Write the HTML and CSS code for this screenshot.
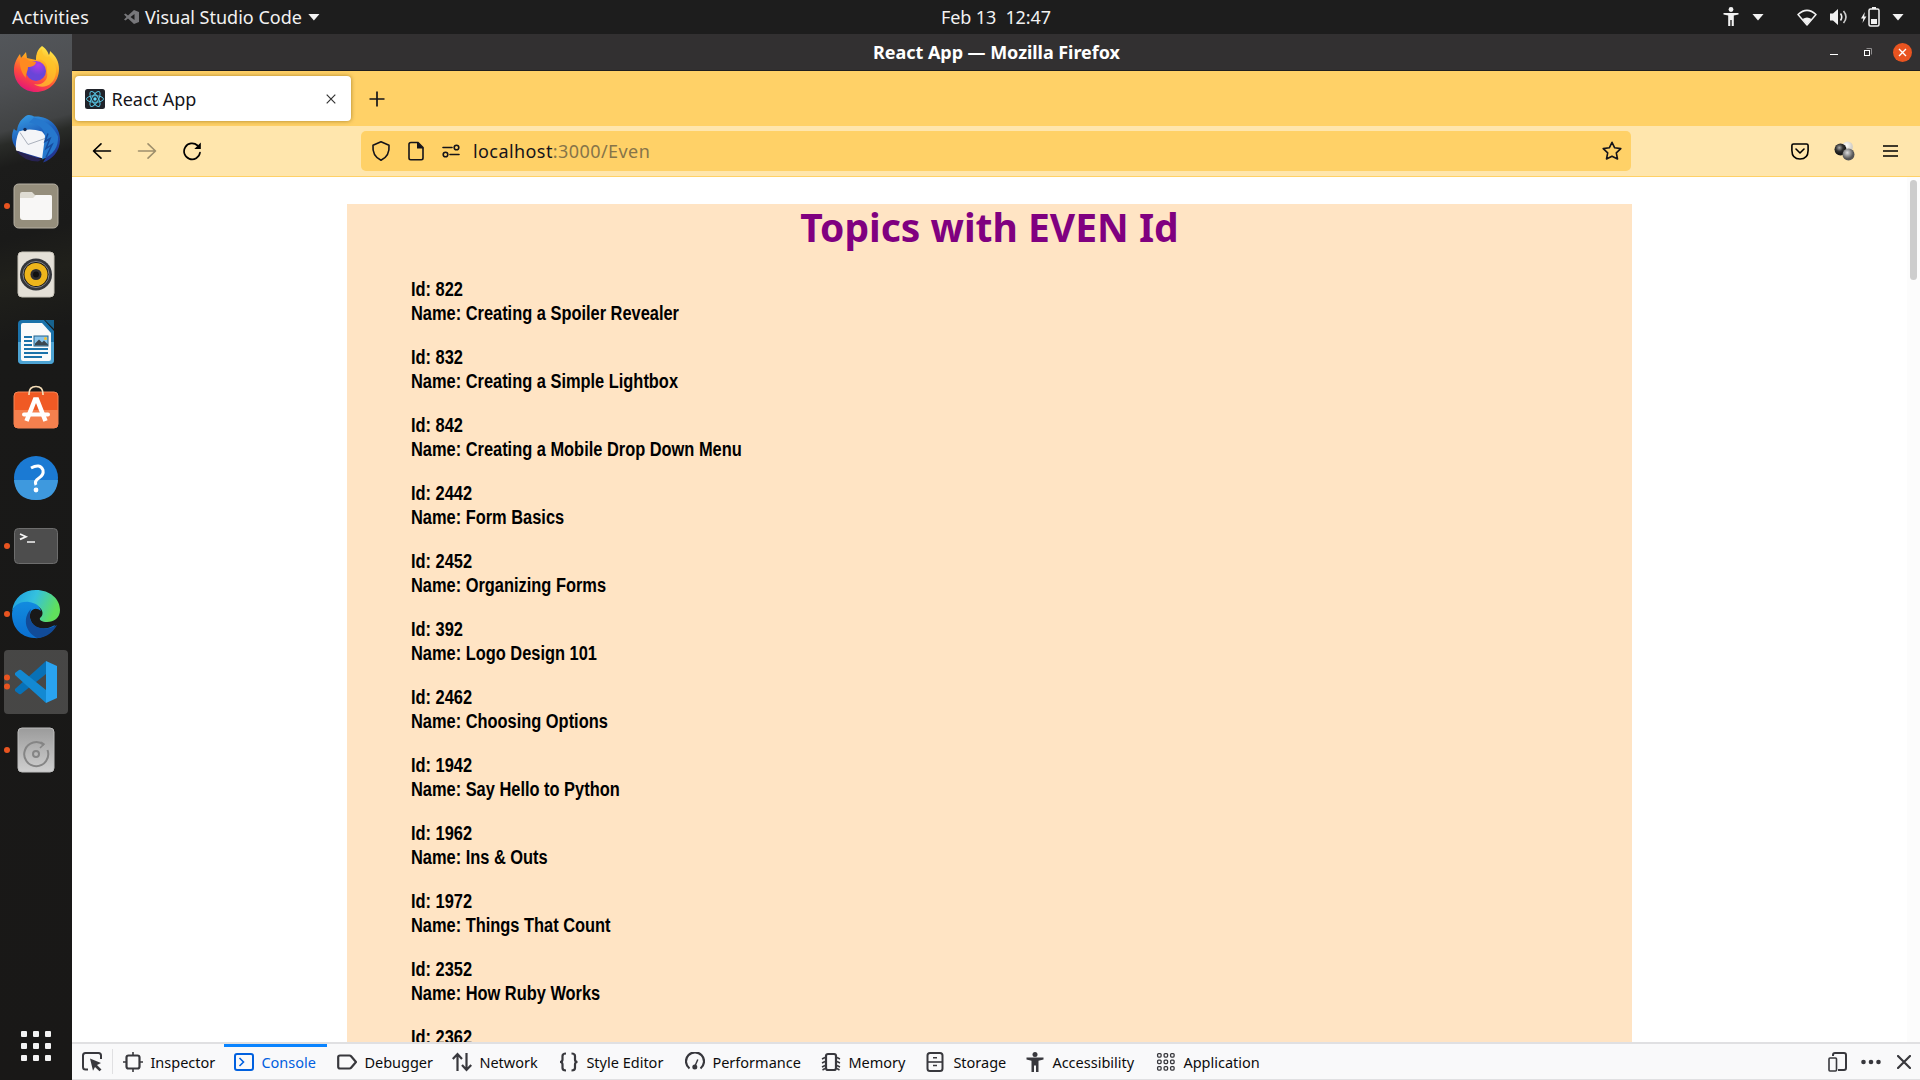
FILE: index.html
```html
<!DOCTYPE html>
<html lang="en">
<head>
<meta charset="utf-8">
<title>React App</title>
<link rel="stylesheet" href="styles.css">
</head>
<body>
<header class="topbar">
  <div class="topbar-left">
    <span class="activities">Activities</span>
    <svg class="app-glyph" width="15" height="14" viewBox="0 0 15 14"><path d="M10 0 15 2V12L10 14 4 8.600 1.500 10.500 0 9.500 2.500 7 0 4.500 1.500 3.500 4 5.400ZM10.500 4 6.500 7 10.500 10Z" fill="#77777a" fill-rule="evenodd"/></svg>
    <span>Visual Studio Code</span>
    <i class="caret"></i>
  </div>
  <span class="clock">Feb 13&nbsp; 12:47</span>
  <div class="topbar-right">
    <svg width="16" height="20" viewBox="0 0 16 20" fill="#f2f2f2"><circle cx="8" cy="2.500" r="2.400"/><path d="M.5 6h15v1.600l-4.700.8V19H8.700v-6H7.300v6H5.200V8.400L.5 7.600Z"/></svg>
    <i class="caret caret-a11y"></i>
    <svg class="wifi" width="20" height="17" viewBox="0 0 20 17"><path d="M1 5.500Q10-2.800 19 5.500L10 16Z" fill="none" stroke="#f2f2f2" stroke-width="1.500" stroke-linejoin="round"/><path d="M5.500 10Q10 7 14.500 10L10 15.500Z" fill="#f2f2f2"/></svg>
    <svg class="volume" width="20" height="18" viewBox="0 0 20 18"><path d="M1 5.500h3L9 1v16L4 12.500H1Z" fill="#f2f2f2"/><path d="M11.500 5.500q2.500 3.500 0 7" stroke="#f2f2f2" stroke-width="1.600" fill="none"/><path d="M14.500 3q5 6 0 12" stroke="#ccc" stroke-width="1.600" fill="none"/></svg>
    <svg class="battery" width="19" height="20" viewBox="0 0 19 20"><path d="M3.800 5 0 11.500h2.300L1.500 16 5.400 9.500H3.200Z" fill="#f2f2f2"/><path d="M11 0h4v2h-4Z" fill="#f2f2f2"/><rect x="8" y="2" width="10" height="17" rx="1.500" fill="none" stroke="#f2f2f2" stroke-width="1.500"/><path d="M10 12h6v5h-6Z" fill="#f2f2f2"/></svg>
    <i class="caret caret-system"></i>
  </div>
</header>

<div class="desktop">
  <nav class="dock">
    <div class="dock-apps">
      <svg viewBox="0 0 72 68">
        <defs>
          <linearGradient id="fx" x1=".8" y1="0" x2=".3" y2="1"><stop offset="0" stop-color="#fff44f"/><stop offset=".4" stop-color="#ffa320"/><stop offset=".7" stop-color="#ff4b3c"/><stop offset="1" stop-color="#e3147a"/></linearGradient>
          <radialGradient id="fxg" cx=".6" cy=".2"><stop offset="0" stop-color="#b03ce8"/><stop offset="1" stop-color="#6a45d8"/></radialGradient>
        </defs>
        <path d="M42 10c5 3 6 7 7 9 1-2 1-4 1-4 6 5 9 11 9 18 0 14-11 23-23 23S14 47 14 34c0-7 3-12 6-16l1 4 5-6 1 6 9 2c0-7 2-11 6-14Z" fill="url(#fx)"/>
        <circle cx="36" cy="35" r="10" fill="url(#fxg)"/>
        <path d="M20 22c4-1 7 0 9 3l7 1c0 3-4 5-8 5 0 5-3 7-2 11-5-5-7-13-6-20Z" fill="#ff8a20"/>
        <path d="M36 24c8-2 12 4 11 12 2 8-5 14-13 12 8 6 21 2 22-12 1-8-5-12-7-16-2 4-7 0-7-7-4 3-6 6-6 11Z" fill="#ffc62a" opacity=".75"/>
      </svg>
      <svg viewBox="0 -1.500 72 68">
        <defs><linearGradient id="tb" x2=".4" y2="1"><stop stop-color="#3aa5ea"/><stop offset=".5" stop-color="#1f62bd"/><stop offset="1" stop-color="#223894"/></linearGradient></defs>
        <path d="M24 12c4-4 8-2 10-1 15-1 26 10 26 23 0 12-8 20-17 23l3-5C29 55 13 46 12 32c0-4 1-7 2-9 1 2 2 2 3 2 1-6 3-10 7-13Z" fill="url(#tb)"/>
        <path d="M19 26q10-4 23 0l4 5-3 22-27-8q-1-10 3-19Z" fill="#f4f5f8"/>
        <path d="M20 27l8 12 17-6" fill="none" stroke="#aab0bc"/>
        <path d="M29 17q15 2 16 14l-3 23q17-7 16-23-7-15-24-19Z" fill="#2678cd"/>
        <path d="M48 28l-3 8 5-3-4 10 6-4-6 13" fill="none" stroke="#174b9c" stroke-width="1.500"/>
        <circle cx="25" cy="24" r="1.700" fill="#142a55"/>
        <path d="M16 45l26 9-4 2q-14 0-22-11Z" fill="#272252"/>
      </svg>
      <svg viewBox="0 0 72 68">
        <circle cx="7" cy="34" r="3" fill="#e95420"/>
        <rect x="14" y="12" width="44" height="44" rx="4.500" fill="#958e7c" stroke="#b7b1a4"/>
        <path d="M20 22q0-2 2-2h10l3 3h15q2 0 2 2v4H20Z" fill="#dfdcd3"/>
        <path d="M20 26h13l3-3h14q2 0 2 2v20q0 3-3 3H23q-3 0-3-3Z" fill="#f8f7f6"/>
      </svg>
      <svg viewBox="0 0 72 68">
        <rect x="18" y="12" width="36" height="45" rx="4" fill="#e4e0d7" stroke="#c9c5ba"/>
        <circle cx="36" cy="34.500" r="16" fill="#34363b"/><circle cx="36" cy="34.500" r="13" fill="#161616" stroke="#85868a"/>
        <circle cx="36" cy="34.500" r="11.500" fill="#edb51c"/><circle cx="36" cy="34.500" r="5.500" fill="#2e2e30"/><circle cx="36" cy="34.500" r="3" fill="#111"/>
      </svg>
      <svg viewBox="0 0 72 68">
        <path d="M22 12h22l10 11v29q0 4-4 4H22q-4 0-4-4V16q0-4 4-4Z" fill="#1b72aa"/><path d="M18 34h36v18q0 4-4 4H22q-4 0-4-4Z" fill="#4da3d3"/>
        <path d="M45 12h9v9Z" fill="#17638f"/>
        <path d="M23 15h19l9 10v26q0 2-2 2H23q-2 0-2-2V17q0-2 2-2Z" fill="#fafafa"/>
        <path d="M24 29h8M24 33h8M24 37h8M24 41h24M24 45h24M24 49h18" stroke="#1b72aa" stroke-width="2"/>
        <rect x="34" y="28" width="14" height="10" fill="#8ac5ec" stroke="#20628c"/><path d="M35 37.500v-2l4-4 3 3 2-2 4 4v1Z" fill="#3b4650"/><circle cx="45.500" cy="30.500" r="1.500" fill="#f6c22f"/>
      </svg>
      <svg viewBox="0 0 72 68">
        <rect x="14" y="16" width="44" height="36" rx="4" fill="#f05a24" stroke="#f58657"/>
        <path d="M14 34h44v14q0 4-4 4H18q-4 0-4-4Z" fill="#f4804e"/>
        <path d="M29 19v-1q0-7.500 7-7.500t7 7.500v1" fill="none" stroke="#f3dcb6" stroke-width="1.700"/>
        <path d="M26.500 45l8.500-21.500h2L45.500 45" fill="none" stroke="#fff" stroke-width="4.500"/>
        <path d="M24 38.500h24" stroke="#fff" stroke-width="4" stroke-linecap="round"/>
      </svg>
      <svg viewBox="0 0 72 68">
        <circle cx="36" cy="34" r="22" fill="#1b7ad3"/><path d="M14 36h44q-2 20-22 20T14 36Z" fill="#3e99de"/>
        <path d="M31 24q9-5 12 2 1 5-4 8t-3 7" fill="none" stroke="#fff" stroke-width="3"/><circle cx="36" cy="46" r="2.400" fill="#fff"/>
      </svg>
      <svg viewBox="0 0 72 68">
        <circle cx="7" cy="34" r="3" fill="#e95420"/>
        <rect x="14.500" y="16.500" width="43" height="35" rx="4" fill="#4d4d4d" stroke="#6d6d6d"/>
        <path d="M20 22l6 2.700-6 2.700M27 30h8" fill="none" stroke="#f5f5f5" stroke-width="1.700"/>
      </svg>
      <svg viewBox="0 0 72 68">
        <defs>
          <linearGradient id="eg" x2="1" y2=".3"><stop stop-color="#1a9be0"/><stop offset=".5" stop-color="#35c1de"/><stop offset="1" stop-color="#60e05c"/></linearGradient>
          <linearGradient id="eb" x2="0" y2="1"><stop stop-color="#128bdf"/><stop offset="1" stop-color="#0a6fd0"/></linearGradient>
        </defs>
        <circle cx="7" cy="34" r="3" fill="#e95420"/>
        <path d="M12 31C14 17 24 10 36 10c14 0 24 9 24 20 0 8-6 12-13 12-5 0-8-2-7-4 4-3 3-8-1-11-9-6-23-4-27 4Z" fill="url(#eg)"/>
        <path d="M12 34c0-8 8-13 17-12 7 1 11 4 12 9-6-5-12-1-11 7 2 10 13 14 25 7-5 10-14 14-21 13C20 57 12 47 12 34Z" fill="url(#eb)"/>
        <path d="M31 29c-8 8-7 22 6 29 10 0 17-7 20-13-12 7-25 3-27-7 0-3 0-6 1-9Z" fill="#114b98"/>
      </svg>
      <svg viewBox="0 0 72 68">
        <rect x="4" y="2" width="64" height="64" rx="4" fill="#fff" opacity=".2"/>
        <circle cx="7" cy="29.500" r="3" fill="#e95420"/><circle cx="7" cy="38.500" r="3" fill="#e95420"/>
        <path d="M15 43l4 3q1 .5 2 0L46 26V13L15 41Z" fill="#0871b7"/>
        <path d="M15 25l4-3q1-.5 2 0L46 42v13L15 27Z" fill="#1389d2"/>
        <path d="M46 13l11 5v32l-11 5Z" fill="#29a3f0"/>
      </svg>
      <svg viewBox="0 0 72 68">
        <defs><linearGradient id="dk" x2="0" y2="1"><stop stop-color="#9b9b9b"/><stop offset="1" stop-color="#cfcfcf"/></linearGradient></defs>
        <circle cx="7" cy="34" r="3" fill="#e95420"/>
        <rect x="18" y="12" width="36" height="44" rx="4" fill="url(#dk)" stroke="#bdbdbd"/>
        <path d="M44 29a12 12 0 1 0 3.500 5" fill="none" stroke="#858585" stroke-width="2"/><path d="M40 32l4-4-3-2" fill="none" stroke="#858585" stroke-width="1.500"/>
        <circle cx="36" cy="38" r="3" fill="none" stroke="#858585" stroke-width="2"/>
      </svg>
    </div>
    <svg class="show-apps" viewBox="0 0 30 30" fill="#f3f3f3"><rect width="6" height="6" rx="1"/><rect x="12" width="6" height="6" rx="1"/><rect x="24" width="6" height="6" rx="1"/><rect y="12" width="6" height="6" rx="1"/><rect x="12" y="12" width="6" height="6" rx="1"/><rect x="24" y="12" width="6" height="6" rx="1"/><rect y="24" width="6" height="6" rx="1"/><rect x="12" y="24" width="6" height="6" rx="1"/><rect x="24" y="24" width="6" height="6" rx="1"/></svg>
  </nav>

  <main class="window">
    <div class="titlebar">
      <span class="window-title">React App — Mozilla Firefox</span>
      <div class="window-buttons">
        <svg width="8" height="18" viewBox="0 0 8 18"><path d="M0 11.500h8" stroke="#fff"/></svg>
        <svg width="9" height="18" viewBox="0 0 9 18" fill="none"><path d="M2.500 5.500h5v6" stroke="#8f8d8e"/><rect x=".5" y="7.500" width="5" height="5" stroke="#fff"/></svg>
        <svg width="19" height="19" viewBox="0 0 19 19"><circle cx="9.500" cy="9.500" r="9.500" fill="#e95420"/><path d="M6 6l7 7M13 6l-7 7" stroke="#fff" stroke-width="1.400"/></svg>
      </div>
    </div>

    <div class="tabstrip">
      <div class="tab">
        <svg width="20" height="20" viewBox="0 0 20 20"><rect width="20" height="20" rx="2.500" fill="#20232a"/><g fill="none" stroke="#57c1de"><ellipse cx="10" cy="10" rx="8.500" ry="3.300"/><ellipse cx="10" cy="10" rx="8.500" ry="3.300" transform="rotate(60 10 10)"/><ellipse cx="10" cy="10" rx="8.500" ry="3.300" transform="rotate(120 10 10)"/></g><circle cx="10" cy="10" r="1.700" fill="#61dafb"/></svg>
        <span class="tab-label">React App</span>
        <svg class="tab-close" width="10" height="10" viewBox="0 0 10 10"><path d="M.7.700l8.600 8.600M9.300.700.7 9.300" stroke="#333" stroke-width="1.200"/></svg>
      </div>
      <svg class="new-tab" width="16" height="16" viewBox="0 0 16 16"><path d="M8 .5v15M.5 8h15" stroke="#15141a" stroke-width="1.700"/></svg>
    </div>

    <div class="toolbar">
      <div class="nav-buttons">
        <svg width="20" height="20" viewBox="0 0 20 20" fill="none" stroke="#000" stroke-width="1.600" stroke-linecap="round" stroke-linejoin="round"><path d="M18.500 10h-17M9 2.800 1.500 10 9 17.200"/></svg>
        <svg width="20" height="20" viewBox="0 0 20 20" fill="none" stroke="#9e8f6c" stroke-width="1.600" stroke-linecap="round" stroke-linejoin="round"><path d="M1.500 10h17M11 2.800l7.500 7.200-7.500 7.200"/></svg>
        <svg width="20" height="20" viewBox="0 0 20 20"><path d="M15.500 4.500A8 8 0 1 0 18 11.500" fill="none" stroke="#000" stroke-width="1.700" stroke-linecap="round"/><path d="M18.800 1.500V8h-6.500Z"/></svg>
      </div>
      <div class="urlbar">
        <svg class="shield" width="20" height="22" viewBox="0 0 20 22"><path d="M10 1.800 18 5.300q1 10.500-8 15-9-4.500-8-15Z" fill="none" stroke="#15141a" stroke-width="1.600" stroke-linejoin="round"/></svg>
        <svg class="page-icon" width="16" height="20" viewBox="0 0 16 20"><path d="M3 1.500h7l5 5V17q0 1.700-1.700 1.700H2.700Q1 18.700 1 17V3.200Q1 1.500 3 1.500Z" fill="none" stroke="#15141a" stroke-width="1.600"/><path d="M9 1v6.500h6.500Z" fill="#15141a"/></svg>
        <svg class="perms" width="18" height="14" viewBox="0 0 18 14" fill="none" stroke="#15141a" stroke-width="1.600" stroke-linecap="round"><path d="M1 3.500h9M8 10.500h9"/><circle cx="14.500" cy="3.500" r="2.300"/><circle cx="3.500" cy="10.500" r="2.300"/></svg>
        <span class="url">localhost<span class="url-path">:3000/Even</span></span>
        <svg class="star" width="20" height="20" viewBox="0 0 20 20"><path d="M10 1.300 12.700 6.800l6.100.8-4.500 4.200 1.200 6.200L10 15.200 4.500 18l1.200-6.200L1.200 7.600l6.100-.8Z" fill="none" stroke="#15141a" stroke-width="1.600" stroke-linejoin="round"/></svg>
      </div>
      <div class="toolbar-actions">
        <svg width="18" height="17" viewBox="0 0 18 17" fill="none" stroke="#000" stroke-width="1.600" stroke-linecap="round" stroke-linejoin="round"><path d="M2.500 1h13q1.600 0 1.600 1.500V7.500Q17 16 9 16T.9 7.500v-5Q.9 1 2.500 1ZM5 6l4 4 4-4"/></svg>
        <svg class="spheres" width="21" height="20" viewBox="0 0 21 20"><defs><radialGradient id="s1" cx=".4" cy=".35"><stop stop-color="#aaa"/><stop offset=".6" stop-color="#333"/><stop offset="1" stop-color="#1a1a1a"/></radialGradient><radialGradient id="s2" cx=".4" cy=".35"><stop stop-color="#fff"/><stop offset="1" stop-color="#d5d1c8"/></radialGradient><radialGradient id="s3" cx=".4" cy=".35"><stop stop-color="#ddd"/><stop offset="1" stop-color="#555"/></radialGradient></defs><circle cx="13.500" cy="6" r="5.500" fill="url(#s2)"/><circle cx="6.500" cy="8.500" r="6" fill="url(#s1)"/><circle cx="14.500" cy="13.500" r="6" fill="url(#s3)"/></svg>
        <svg width="15" height="13" viewBox="0 0 15 13"><path d="M0 1h15M0 6h15M0 11h15" stroke="#000" stroke-width="1.500"/></svg>
      </div>
    </div>

    <div class="viewport">
      <section class="topics">
        <h1>Topics with EVEN Id</h1>
        <ul class="topic-list">
          <li>Id: 822<br>Name: Creating a Spoiler Revealer</li>
          <li>Id: 832<br>Name: Creating a Simple Lightbox</li>
          <li>Id: 842<br>Name: Creating a Mobile Drop Down Menu</li>
          <li>Id: 2442<br>Name: Form Basics</li>
          <li>Id: 2452<br>Name: Organizing Forms</li>
          <li>Id: 392<br>Name: Logo Design 101</li>
          <li>Id: 2462<br>Name: Choosing Options</li>
          <li>Id: 1942<br>Name: Say Hello to Python</li>
          <li>Id: 1962<br>Name: Ins &amp; Outs</li>
          <li>Id: 1972<br>Name: Things That Count</li>
          <li>Id: 2352<br>Name: How Ruby Works</li>
          <li>Id: 2362</li>
        </ul>
      </section>
      <div class="scrollbar"><div class="thumb"></div></div>
    </div>

    <div class="devtools">
      <div class="picker">
        <svg width="20" height="20" viewBox="0 0 20 20"><path d="M6 17.500H3.500Q1 17.500 1 15V3.500Q1 1 3.500 1h13Q19 1 19 3.500V7" fill="none" stroke="#38383d" stroke-width="2"/><path d="M8 6.500l11 4.500-4 2 4.500 4.500-2 1.700L13 15l-2 3.800Z" fill="#38383d"/></svg>
      </div>
      <div class="tool">
        <svg width="20" height="20" viewBox="0 0 20 20" fill="none" stroke="#38383d"><rect x="3.500" y="3.500" width="13" height="13" rx="2" stroke-width="2.200"/><path d="M10 0v3M10 17v3M0 10h3M17 10h3" stroke-width="1.600"/></svg>
        <span>Inspector</span>
      </div>
      <div class="tool tool-active">
        <svg width="20" height="20" viewBox="0 0 20 20" fill="none" stroke="#0060df"><rect x="1" y="2" width="18" height="16" rx="2" stroke-width="2"/><path d="M5.500 6l4 4-4 4" stroke-width="1.600"/></svg>
        <span>Console</span>
      </div>
      <div class="tool">
        <svg width="20" height="20" viewBox="0 0 20 20"><path d="M3 3.500h9.500q1 0 1.600.7L19 10l-4.900 5.800q-.6.700-1.600.700H3q-1.800 0-1.800-1.700V5.200Q1.200 3.500 3 3.500Z" fill="none" stroke="#38383d" stroke-width="2.200"/></svg>
        <span>Debugger</span>
      </div>
      <div class="tool">
        <svg width="20" height="20" viewBox="0 0 20 20" fill="none" stroke="#38383d" stroke-width="2.200"><path d="M5.500 19V2M.8 7l4.700-5L10 7M14.500 1v17M10 13l4.500 5 4.700-5"/></svg>
        <span>Network</span>
      </div>
      <div class="tool">
        <svg width="20" height="20" viewBox="0 0 20 20" fill="none" stroke="#38383d" stroke-width="2.200"><path d="M7 1.500Q3.500 1.500 3.500 4v3.500Q3.500 10 1 10q2.500 0 2.500 2.500V16q0 2.500 3.500 2.500M12.500 1.500Q16 1.500 16 4v3.500q0 2.500 2.500 2.500-2.500 0-2.500 2.500V16q0 2.500-3.500 2.500"/></svg>
        <span>Style Editor</span>
      </div>
      <div class="tool">
        <svg width="20" height="20" viewBox="0 0 20 20" fill="none" stroke="#38383d"><path d="M4.500 16.500a9 9 0 1 1 11 0" stroke-width="2.200"/><path d="M10 14l2.800-6.500" stroke-width="1.500"/><circle cx="9.800" cy="15" r="2.500" fill="#38383d" stroke="none"/></svg>
        <span>Performance</span>
      </div>
      <div class="tool">
        <svg width="20" height="20" viewBox="0 0 20 20" fill="none" stroke="#38383d"><rect x="5" y="2" width="10" height="16" rx="2" stroke-width="2.200"/><path d="M4 5.500 1 7M4 9.500 1 11M4 13.500 1 15M4 16.500 1.500 18M16 5.500l3 1.500M16 9.500l3 1.500M16 13.500l3 1.500M16 16.500l2.500 1.500" stroke-width="1.500"/></svg>
        <span>Memory</span>
      </div>
      <div class="tool">
        <svg width="20" height="20" viewBox="0 0 20 20" fill="none" stroke="#38383d"><rect x="1.500" y="1" width="15" height="18" rx="2.500" stroke-width="2"/><path d="M2 10h14" stroke-width="1.600"/><path d="M7 5.700h4M7 13.500h4" stroke-width="1.600"/></svg>
        <span>Storage</span>
      </div>
      <div class="tool">
        <svg width="20" height="20" viewBox="0 0 20 20" fill="#38383d"><circle cx="10" cy="2.600" r="2.500"/><path d="M1.500 5.500h17v2l-5 1.200V20H11v-6.500H9V20H6.500V8.700l-5-1.200Z"/></svg>
        <span>Accessibility</span>
      </div>
      <div class="tool">
        <svg width="20" height="20" viewBox="0 0 20 20" fill="none" stroke="#38383d" stroke-width="1.300"><rect x="1.600" y="1.600" width="3.500" height="3.500" rx="1"/><rect x="8.100" y="1.600" width="3.500" height="3.500" rx="1"/><rect x="14.600" y="1.600" width="3.500" height="3.500" rx="1"/><rect x="1.600" y="8.100" width="3.500" height="3.500" rx="1"/><rect x="8.100" y="8.100" width="3.500" height="3.500" rx="1"/><rect x="14.600" y="8.100" width="3.500" height="3.500" rx="1"/><rect x="1.600" y="14.600" width="3.500" height="3.500" rx="1"/><rect x="8.100" y="14.600" width="3.500" height="3.500" rx="1"/><rect x="14.600" y="14.600" width="3.500" height="3.500" rx="1"/></svg>
        <span>Application</span>
      </div>
      <div class="devtools-actions">
        <svg width="20" height="20" viewBox="0 0 20 20" fill="none" stroke="#38383d"><path d="M5 4V3q0-2 2-2h9q2 0 2 2v13q0 2-2 2h-6" stroke-width="2"/><rect x="1" y="6" width="7.500" height="13" rx="1" stroke-width="1.600"/></svg>
        <svg width="20" height="20" viewBox="0 0 20 20" fill="#38383d"><circle cx="2.500" cy="10" r="2.300"/><circle cx="10" cy="10" r="2.300"/><circle cx="17.500" cy="10" r="2.300"/></svg>
        <svg width="14" height="14" viewBox="0 0 14 14"><path d="M1 1l12 12M13 1 1 13" stroke="#38383d" stroke-width="2.200" stroke-linecap="round"/></svg>
      </div>
    </div>
  </main>
</div>
</body>
</html>
```
FILE: styles.css
```css
* { box-sizing: border-box; }

body {
  margin: 0;
  width: 1920px;
  height: 1080px;
  overflow: hidden;
  display: flex;
  flex-direction: column;
  background: #1d1d1d;
  font-family: "Noto Sans", "Open Sans", sans-serif;
  font-size: 18px;
}

svg { display: block; flex: none; }

/* System bar */
.topbar {
  flex: none;
  height: 34px;
  display: grid;
  grid-template-columns: 941px auto 1fr;
  align-items: center;
  background: #1d1d1d;
  color: #f2f2f2;
  line-height: 33px;
}
.topbar-left, .topbar-right { display: flex; align-items: center; }
.topbar-left { padding-left: 12px; }
.topbar-right { justify-content: flex-end; padding-right: 16px; }
.activities { width: 112px; letter-spacing: 0.2px; }
.app-glyph { margin-right: 6px; }
.clock { letter-spacing: -0.1px; }
.caret {
  width: 12px;
  height: 7px;
  margin-left: 6px;
  background: #f2f2f2;
  clip-path: polygon(0 0, 100% 0, 50% 100%);
}
.caret-a11y { margin-left: 13px; }
.wifi { margin-left: 33px; }
.volume { margin-left: 12px; }
.battery { margin-left: 12px; }
.caret-system { margin-left: 12px; }

.desktop { flex: 1; display: flex; min-height: 0; }

/* Dock */
.dock {
  flex: none;
  width: 72px;
  display: flex;
  flex-direction: column;
  justify-content: space-between;
  align-items: center;
  padding: 2px 0 19px;
  background:
    linear-gradient(165deg, #53565a 0, #4e5053 50px, #414344 95px, #292b28 108px, #1c1c1b 130px, #1a1a19 200px, #20201b 240px, #191918 300px, #191817 100%);
}
.dock-apps { display: flex; flex-direction: column; }
.dock-apps svg { width: 72px; height: 68px; }
.show-apps { width: 30px; height: 30px; }

/* Browser window */
.window {
  flex: 1;
  min-width: 0;
  display: flex;
  flex-direction: column;
  background: #fff;
}
.titlebar {
  flex: none;
  height: 37px;
  display: grid;
  grid-template-columns: 1fr auto 1fr;
  align-items: center;
  background: #323031;
  border-bottom: 1px solid #1f1e1e;
  color: #fff;
}
.window-title {
  grid-column: 2;
  padding-left: 1px;
  font-weight: 700;
  line-height: 36px;
  letter-spacing: -0.05px;
}
.window-buttons {
  display: flex;
  align-items: center;
  justify-content: flex-end;
  padding-right: 8px;
}
.window-buttons svg + svg { margin-left: 26px; }
.window-buttons svg:last-child { margin-left: 20px; }

.tabstrip {
  flex: none;
  height: 55px;
  display: flex;
  align-items: center;
  padding: 0 3px;
  background: #ffd167;
}
.tab {
  width: 276px;
  height: 45px;
  display: flex;
  align-items: center;
  padding: 0 15px 0 10px;
  border-radius: 4px;
  background: #fff;
  box-shadow: 0 0 4px rgba(110, 80, 0, 0.6);
  color: #15141a;
}
.tab-label { margin-left: 6.5px; flex: 1; }
.new-tab { margin-left: 18px; }

.toolbar {
  flex: none;
  height: 51px;
  display: flex;
  align-items: center;
  padding: 0 22px 0 20px;
  background: #ffe6ad;
  border-bottom: 1px solid #ffd167;
}
.nav-buttons { display: flex; gap: 25px; width: 269px; }
.urlbar {
  width: 1270px;
  height: 40px;
  display: flex;
  align-items: center;
  padding: 0 9px 0 10px;
  border-radius: 5px;
  background: #ffd167;
  color: #15141a;
}
.page-icon { margin-left: 17px; }
.perms { margin-left: 18px; }
.url { margin-left: 13px; flex: 1; letter-spacing: 0.42px; }
.url-path { color: #867449; }
.toolbar-actions {
  flex: 1;
  display: flex;
  align-items: center;
  justify-content: flex-end;
}
.spheres { margin: 0 28px 0 25px; }

/* Page */
.viewport {
  flex: 1;
  min-height: 0;
  display: flex;
  overflow: hidden;
  background: #fff;
}
.topics {
  flex: none;
  width: 1285px;
  margin: 27px 0 0 275px;
  background: #ffe4c4;
}
.topics h1 {
  margin: 0;
  height: 48px;
  line-height: 46px;
  text-align: center;
  color: purple;
  font-size: 39px;
}
/* Condensed bold face: Liberation Sans narrowed to 82% */
.topic-list {
  margin: 25px 0 0 64.4px;
  padding: 0;
  list-style: none;
  font: 700 20px/24px "Liberation Sans Narrow", "Liberation Sans", Arial, sans-serif;
  color: #000;
  transform: scaleX(0.82);
  transform-origin: 0 0;
}
.topic-list li { margin-bottom: 20px; }
.scrollbar {
  width: 13px;
  margin-left: auto;
  padding: 3px 3px 0;
  background: #fcfcfc;
}
.thumb { width: 7px; height: 100px; border-radius: 4px; background: #cdcdcd; }

/* Developer tools bar */
.devtools {
  flex: none;
  height: 38px;
  display: grid;
  grid-template-columns: 41px 111px 103px 115px 107px 126px 136px 105px 99px 131px 125px 1fr;
  background: #f9f9fa;
  border-top: 2px solid #e0e0e2;
  border-bottom: 1px solid #e0e0e2;
  color: #0c0c0d;
  font-size: 14.5px;
}
.picker {
  display: flex;
  align-items: center;
  height: 25px;
  margin-top: 5px;
  padding-left: 10px;
  border-right: 1px solid #e0e0e2;
}
.tool {
  display: flex;
  align-items: center;
  gap: 7.4px;
  padding-left: 10px;
  white-space: nowrap;
}
.tool-active { color: #0060df; box-shadow: inset 0 3px #0a84ff; }
.devtools-actions {
  display: flex;
  align-items: center;
  justify-content: flex-end;
  gap: 13px;
  padding-right: 9px;
}
.devtools-actions svg:last-child { margin-left: 3px; }
```
